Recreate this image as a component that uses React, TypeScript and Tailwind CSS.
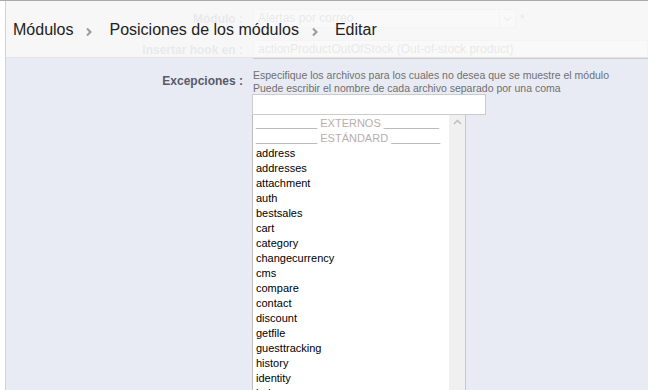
import React from "react";

const items = [
  "address",
  "addresses",
  "attachment",
  "auth",
  "bestsales",
  "cart",
  "category",
  "changecurrency",
  "cms",
  "compare",
  "contact",
  "discount",
  "getfile",
  "guesttracking",
  "history",
  "identity",
  "index",
  "manufacturer",
];

function Chevron() {
  return (
    <svg width="8" height="10" viewBox="0 0 8 10" className="ml-[12px] mr-[16px] mt-[3px]">
      <path d="M2 1.5 L5.5 5 L2 8.5" fill="none" stroke="#9a9a9a" strokeWidth="2" />
    </svg>
  );
}

export default function App() {
  return (
    <div
      className="relative w-[648px] h-[390px] overflow-hidden bg-white border-t border-[#a9a9a9]"
      style={{ fontFamily: '"Liberation Sans", Arial, sans-serif' }}
    >
      <div className="ml-[5px] h-full border-l border-[#cfd1d8] bg-[#e8ebf4]">
        <div className="pt-[8px]">
          {/* Row: Módulo */}
          <div className="flex items-center h-[19px]">
            <div className="w-[237px] text-right text-[12px] font-bold text-[#585a69]">Módulo :</div>
            <div className="ml-[10px] flex items-center">
              <div className="flex h-[19px] w-[263px] bg-white border border-[#ccc]">
                <div className="flex-1 pl-[4px] text-[12px] leading-[17px] text-[#555]">Alertas por correo</div>
                <div className="w-[16px] border-l border-[#ccc] flex items-center justify-center">
                  <svg width="9" height="6" viewBox="0 0 9 6">
                    <path d="M1 1 L4.5 4.5 L8 1" fill="none" stroke="#999" strokeWidth="1.5" />
                  </svg>
                </div>
              </div>
              <span className="ml-[4px] text-[#e00] text-[12px]">*</span>
            </div>
          </div>
          {/* Row: Insertar hook */}
          <div className="flex items-center h-[19px] mt-[12px]">
            <div className="w-[237px] text-right text-[12px] font-bold text-[#585a69]">Insertar hook en :</div>
            <div className="ml-[10px] flex-1 h-[19px] bg-white border border-[#ccc] pl-[4px] text-[12px] leading-[17px] text-[#555]">
              actionProductOutOfStock (Out-of-stock product)
            </div>
          </div>
          {/* Row: Excepciones */}
          <div className="flex mt-[10px]">
            <div className="w-[237px] text-right text-[12px] font-bold text-[#585a69] pt-[3px]">Excepciones :</div>
            <div className="ml-[9px] flex flex-col">
              <div className="pl-[1px] text-[10.5px] leading-[13px] text-[#6f6f6f] whitespace-nowrap">
                Especifique los archivos para los cuales no desea que se muestre el módulo
              </div>
              <div className="pl-[1px] text-[10.5px] leading-[13px] text-[#6f6f6f] whitespace-nowrap">
                Puede escribir el nombre de cada archivo separado por una coma
              </div>
              <div className="-mt-[1px] w-[234px] h-[21px] bg-white border border-[#cccccc]" />
              <div className="flex w-[214px] h-[300px] bg-white border-l border-[#bcbcbc]">
                <div className="flex-1 pl-[3px] pt-[1px] text-[11px] leading-[15px] text-black whitespace-nowrap overflow-hidden">
                  <div className="text-[#a9a9a9]">
                    __________ <span className="text-[#b9aeab]">EXTERNOS</span> _________
                  </div>
                  <div className="text-[#a9a9a9]">
                    __________ <span className="text-[#b9aeab]">ESTÁNDARD</span> ________
                  </div>
                  {items.map((it) => (
                    <div key={it}>{it}</div>
                  ))}
                </div>
                <div className="w-[17px] bg-[#f0f0f0] border-r border-[#c8c8c8] flex justify-center pt-[4px]">
                  <svg width="9" height="6" viewBox="0 0 9 6">
                    <path d="M1 5 L4.5 1.5 L8 5" fill="none" stroke="#c2c2c2" strokeWidth="1.6" />
                  </svg>
                </div>
              </div>
            </div>
          </div>
        </div>
      </div>

      {/* Sticky page header overlay */}
      <div className="absolute left-[6px] right-0 top-0 h-[57px] bg-[#f8f8f8]/90 border-b border-[#e4e4e4] flex items-center pl-[7px]">
        <div className="flex items-center text-[16px] text-[#222] pt-[2px]">
          <span>Módulos</span>
          <Chevron />
          <span>Posiciones de los módulos</span>
          <Chevron />
          <span>Editar</span>
        </div>
      </div>
    </div>
  );
}
